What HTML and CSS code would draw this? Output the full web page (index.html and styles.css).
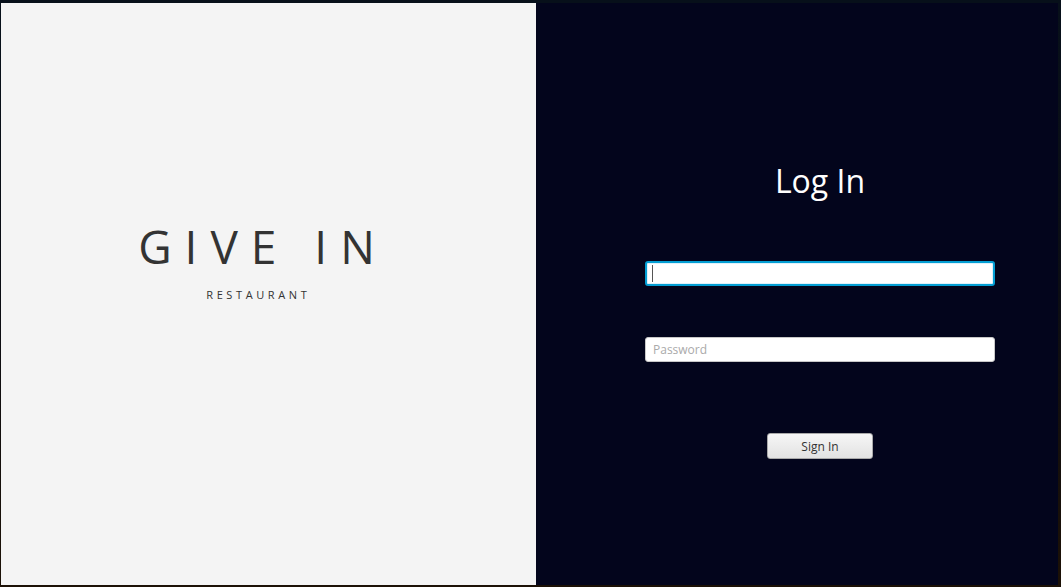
FILE: index.html
```html
<!DOCTYPE html>
<html lang="en">
<head>
    <meta charset="UTF-8">
    <title>Give In - Log In</title>
    <link rel="stylesheet" href="styles.css">
</head>
<body>
    <div class="window">
        <div class="brand-pane">
            <div class="brand">
                <h1 class="brand-title">GIVE IN</h1>
                <p class="brand-sub">RESTAURANT</p>
            </div>
        </div>
        <div class="login-pane">
            <h2 class="login-title">Log In</h2>
            <div class="field-wrap">
                <input class="field field-focused" type="text" value="">
                <span class="caret"></span>
            </div>
            <input class="field field-password" type="password" placeholder="Password">
            <button class="sign-in">Sign In</button>
        </div>
    </div>
</body>
</html>
```

FILE: styles.css
```css
html, body {
    margin: 0;
    padding: 0;
    width: 100%;
    height: 100%;
    overflow: hidden;
    background: linear-gradient(180deg, #07101a 0%, #0b0d14 50%, #1c1106 100%);
}
.window {
    display: flex;
    height: 582px;
    margin: 3px 3px 2px 1px;
    font-family: "Open Sans", "Noto Sans", sans-serif;
}

/* left side */
.brand-pane {
    width: 535px;
    background-color: #f4f4f4;
    display: flex;
    align-items: center;
    justify-content: center;
}
.brand {
    text-align: center;
    margin-top: -70px;
    margin-left: -24px;
}
.brand-title {
    margin: 0;
    font-size: 46px;
    font-weight: 400;
    letter-spacing: 13px;
    padding-left: 13px;
    color: #333;
    line-height: 60px;
}
.brand-sub {
    margin: 11px 0 0 0;
    font-size: 11px;
    letter-spacing: 3.6px;
    padding-left: 3.6px;
    color: #333;
}

/* right side */
.login-pane {
    flex: 1;
    background-color: #03051c;
    display: flex;
    flex-direction: column;
    align-items: center;
    padding-left: 46px;
    padding-top: 156px;
}
.login-title {
    margin: 0;
    font-size: 32px;
    font-weight: 400;
    color: #fff;
    line-height: 44px;
}
.field-wrap {
    position: relative;
    margin-top: 58px;
}
.field {
    display: block;
    box-sizing: border-box;
    width: 350px;
    height: 25px;
    border: 1px solid #c8c8c8;
    border-radius: 3px;
    background: #fff;
    font-family: inherit;
    font-size: 12px;
    padding: 0 7px;
    outline: none;
}
.field::placeholder {
    color: #aaa;
}
.field-focused {
    border: 2px solid #039ed3;
    box-shadow: inset 0 0 0 1px #dff1fa;
}
.caret {
    position: absolute;
    left: 7px;
    top: 4px;
    width: 1px;
    height: 17px;
    background: #555;
}
.field-password {
    margin-top: 51px;
}
.sign-in {
    margin-top: 71px;
    width: 106px;
    height: 26px;
    border: 1px solid #a9a9a9;
    border-radius: 3px;
    background: linear-gradient(180deg, #f6f6f6 0%, #e2e2e2 100%);
    font-family: inherit;
    font-size: 12px;
    color: #333;
}
```
